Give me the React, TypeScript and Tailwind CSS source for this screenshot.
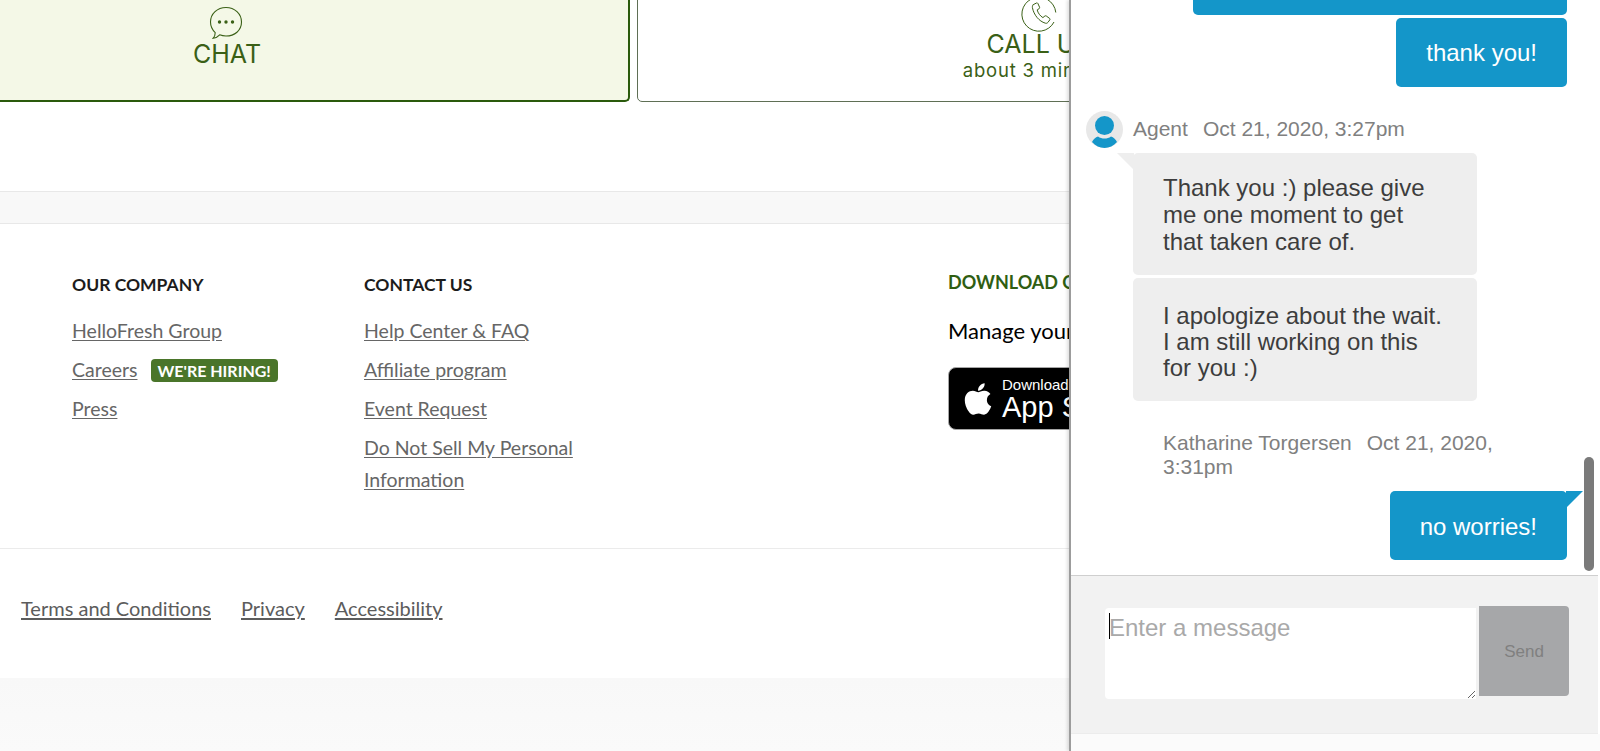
import React from 'react';
import { FaApple } from 'react-icons/fa';

const sans = 'font-["Lato",sans-serif]';
const helv = 'font-["Liberation_Sans",Arial,sans-serif]';
const cardFont = 'font-["Inter",sans-serif]';

const ChatIcon = () => (
  <svg className="mr-[3px]" width="34" height="34" viewBox="0 0 34 34" fill="none" stroke="#3a6016" strokeWidth="1.1">
    <path d="M17 1.500c8.600 0 15.500 6.100 15.500 14.600S25.600 30 17 30c-2.300 0-4.400-.4-6.300-1.200-1.600 1.700-3.700 3-6.500 3.400 1.300-1.500 2-3.500 2-5.500C3.400 24 1.500 20.300 1.500 16.100 1.500 7.600 8.400 1.500 17 1.500z" />
    <circle cx="10.500" cy="16" r="1.700" fill="#3a6016" stroke="none" />
    <circle cx="17" cy="16" r="1.700" fill="#3a6016" stroke="none" />
    <circle cx="23.500" cy="16" r="1.700" fill="#3a6016" stroke="none" />
  </svg>
);

const PhoneIcon = () => (
  <svg width="36" height="36" viewBox="0 0 36 36" fill="none" stroke="#3a6016" strokeWidth="1">
    <path d="M34.800 16.500A17 17 0 1 0 33 26" />
    <path d="M12.500 8.500l3-1.500c.6-.3 1.200 0 1.400.5l1.700 3.800c.2.500 0 1-.4 1.300l-2 1.300c.7 3 3 6.200 5.700 7.700l2-1.600c.4-.3 1-.3 1.400 0l3.300 2.400c.5.300.6 1 .2 1.500l-1.900 2.500c-.6.800-1.600 1.100-2.500.8-6.400-1.900-11.600-8.300-13-15.600-.2-1.200.3-2.300 1.100-3.400z" />
  </svg>
);

const AgentAvatar = () => (
  <svg width="37" height="37" viewBox="0 0 37 37">
    <circle cx="18.500" cy="18.500" r="18.500" fill="#e8e8e8" />
    <circle cx="18.500" cy="14.500" r="9.500" fill="#1496c9" />
    <path d="M6 31c1.500-3 3.500-4.500 6-5.500 2 1.400 4 2 6.500 2s4.500-.6 6.500-2c2.500 1 4.500 2.500 6 5.500-3.300 3.800-7.800 6-12.500 6S9.300 34.800 6 31z" fill="#1496c9" />
  </svg>
);

const FooterLink = ({ children }: { children: React.ReactNode }) => (
  <a className="text-[19.500px] leading-[32px] text-[#666666] underline underline-offset-2">{children}</a>
);

const LegalLink = ({ children }: { children: React.ReactNode }) => (
  <a className="text-[20px] leading-[32px] text-[#5c5c5c] underline underline-offset-2">{children}</a>
);

const FooterHeading = ({ children }: { children: React.ReactNode }) => (
  <h4 className="text-[17.500px] leading-[24px] font-bold text-[#1c1c1c]">{children}</h4>
);

const LeftPage = () => (
  <div className={`flex w-[1069px] shrink-0 flex-col overflow-hidden bg-white ${sans}`}>
    {/* contact cards, the top of them is scrolled away */}
    <div className={`-mt-[28px] -ml-[174px] flex gap-[7px] ${cardFont}`}>
      <div className="flex h-[130px] w-[804px] shrink-0 flex-col items-center rounded-[5px] border-r-2 border-b-2 border-[#2a5a0c] bg-[#f4f8e7] pt-[34px] text-[#3a6016]">
        <ChatIcon />
        <span className="-mt-[1px] text-[25px] leading-[30px]">CHAT</span>
      </div>
      <div className="flex h-[130px] w-[804px] shrink-0 flex-col items-center rounded-[5px] border border-[#5f6f55] bg-white pt-[23px] text-[#3a6016]">
        <PhoneIcon />
        <span className="-mt-[1px] text-[25px] leading-[26px]">CALL US</span>
        <span className="mt-[1px] text-[18.500px] leading-[24px] tracking-[0.8px]">about 3 minutes</span>
      </div>
    </div>

    <div className="mt-[89px] h-[33px] shrink-0 border-y border-[#e8e8e8] bg-[#f8f8f8]" />

    <div className="flex h-[325px] shrink-0 border-b border-[#ebebeb] pt-[49px] pl-[72px]">
      <div className="w-[292px] shrink-0">
        <FooterHeading>OUR COMPANY</FooterHeading>
        <ul className="mt-[18px] flex flex-col gap-[7px]">
          <li><FooterLink>HelloFresh Group</FooterLink></li>
          <li className="flex items-center">
            <FooterLink>Careers</FooterLink>
            <span className="ml-[13px] rounded-[4px] bg-[#4a752a] px-[7px] text-[16px] leading-[23px] font-bold text-white">WE'RE HIRING!</span>
          </li>
          <li><FooterLink>Press</FooterLink></li>
        </ul>
      </div>
      <div className="w-[584px] shrink-0">
        <FooterHeading>CONTACT US</FooterHeading>
        <ul className="mt-[18px] flex flex-col gap-[7px]">
          <li><FooterLink>Help Center &amp; FAQ</FooterLink></li>
          <li><FooterLink>Affiliate program</FooterLink></li>
          <li><FooterLink>Event Request</FooterLink></li>
          <li className="w-[240px]"><FooterLink>Do Not Sell My Personal Information</FooterLink></li>
        </ul>
      </div>
      <div className="-mt-[3px] w-[300px] shrink-0">
        <h4 className="text-[18px] leading-[24px] font-bold whitespace-nowrap text-[#2f5e12]">DOWNLOAD OUR APP</h4>
        <p className="mt-[23px] text-[22px] leading-[28px] whitespace-nowrap text-black">Manage your deliveries on the go</p>
        <div className="mt-[22px] flex h-[63px] w-[190px] items-center rounded-[8px] border border-[#a6a6a6] bg-black pl-[14px] text-white">
          <FaApple className="h-[36px] w-[30px]" />
          <div className={`ml-[9px] flex flex-col ${helv}`}>
            <span className="text-[15px] leading-[16px] whitespace-nowrap">Download on the</span>
            <span className="text-[29px] leading-[28px] whitespace-nowrap">App Store</span>
          </div>
        </div>
      </div>
    </div>

    <div className="flex h-[129px] shrink-0 gap-[30px] pt-[43px] pl-[21px]">
      <LegalLink>Terms and Conditions</LegalLink>
      <LegalLink>Privacy</LegalLink>
      <LegalLink>Accessibility</LegalLink>
    </div>

    <div className="flex-1 bg-gradient-to-b from-[#f8f8f8] to-[#fafafa]" />
  </div>
);

const ChatPanel = () => (
  <div className={`relative flex w-[531px] shrink-0 flex-col border-l-2 border-[#9c9c9c] bg-white shadow-[-2px_0_3px_rgba(0,0,0,0.12)] ${helv}`}>
    <div className="h-[575px] shrink-0 overflow-hidden">
      <div className="-mt-[40px] flex flex-col">
        <div className="ml-[122px] h-[55px] w-[374px] rounded-[5px] bg-[#1496c9]" />
        <div className="mt-[3px] mr-[33px] self-end rounded-[5px] bg-[#1496c9] px-[30px] py-[22px] text-[24px] leading-[25px] text-white">thank you!</div>

        <div className="mt-[24px] flex items-center pl-[15px] text-[21px] leading-[24px] text-[#808080]">
          <AgentAvatar />
          <span className="mb-[2px] ml-[10px]">Agent</span>
          <span className="mb-[2px] ml-[15px]">Oct 21, 2020, 3:27pm</span>
        </div>
        <div className="relative mt-[5px] ml-[62px] w-[344px] rounded-[5px] bg-[#eeeeee] pt-[21px] pr-[30px] pb-[20px] pl-[30px] text-[24px] leading-[27px] text-[#3d3d3d]">
          <span className="absolute top-0 -left-[16px] h-[17px] w-[17px] bg-[#eeeeee] [clip-path:polygon(0_0,100%_0,100%_100%)]" />
          Thank you :) please give me one moment to get that taken care of.
        </div>
        <div className="mt-[3px] ml-[62px] w-[344px] rounded-[5px] bg-[#eeeeee] pt-[25px] pr-[30px] pb-[20px] pl-[30px] text-[24px] leading-[26px] text-[#3d3d3d]">
          I apologize about the wait. I am still working on this for you :)
        </div>

        <div className="mt-[30px] ml-[92px] w-[340px] text-[21px] leading-[24px] text-[#808080]">
          Katharine Torgersen<span className="ml-[15px]">Oct 21, 2020, 3:31pm</span>
        </div>
        <div className="relative mt-[12px] mr-[33px] self-end rounded-[5px] bg-[#1496c9] px-[30px] pt-[23px] pb-[21px] text-[24px] leading-[25px] text-white">
          <span className="absolute top-0 -right-[16px] h-[17px] w-[17px] bg-[#1496c9] [clip-path:polygon(0_0,100%_0,0_100%)]" />
          no worries!
        </div>
      </div>
    </div>

    {/* scrollbar thumb sits on top of the list */}
    <div className="absolute top-[457px] left-[513px] h-[114px] w-[10px] rounded-full bg-[#7a7a7a]" />

    <div className="mr-[2px] flex h-[159px] shrink-0 items-start border-t border-b border-[#cfcfcf] border-b-[#ececec] bg-[#f2f2f2] pt-[30px] pl-[34px]">
      <div className="relative mt-[2px]">
        <textarea
          readOnly
          placeholder="Enter a message"
          className="block h-[91px] w-[371px] rounded-l-[4px] bg-white pt-[6px] pr-[8px] pb-[4px] pl-[4px] text-[24px] leading-[28px] outline-none placeholder:text-[#a9a9a9]"
        />
        <span className="absolute top-[5px] left-[4px] h-[26px] w-px bg-black" />
      </div>
      <button className="ml-[3px] h-[90px] w-[90px] rounded-r-[4px] bg-[#a6a7a9] pt-[1px] text-[17px] text-[#808080]">Send</button>
    </div>
    <div className="flex-1 bg-[#fbfbfb]" />
  </div>
);

export default function App() {
  return (
    <div className="flex h-[751px] w-[1600px] overflow-hidden bg-white">
      <LeftPage />
      <ChatPanel />
    </div>
  );
}
